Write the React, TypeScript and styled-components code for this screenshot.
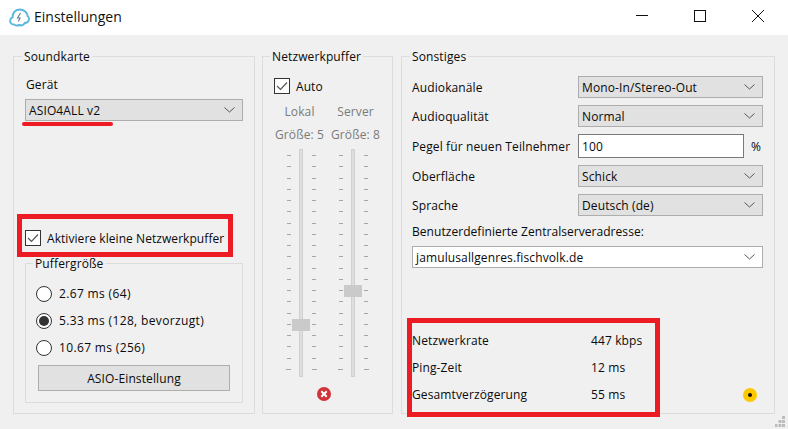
import React from "react";
import styled, { createGlobalStyle } from "styled-components";

const Global = createGlobalStyle`
  html, body { margin: 0; padding: 0; background: #f0f0f0; }
  * { box-sizing: border-box; }
`;

const Window = styled.div`
  position: relative;
  width: 788px;
  height: 429px;
  overflow: hidden;
  background: #f0f0f0;
  color: #0a0a0a;
  font-family: "Open Sans", "Noto Sans", sans-serif;
  font-size: 12px;
  letter-spacing: 0.12px;
`;

const TitleBar = styled.header`
  height: 35px;
  background: #fff;
  display: flex;
  align-items: center;
  padding: 0 1px 0 9px;
`;

const WindowTitle = styled.span`
  font-size: 14px;
  letter-spacing: 0;
  margin: 0 0 2px 4px;
  flex: 1;
  color: #111;
`;

const CaptionButton = styled.div`
  width: 58px;
  height: 32px;
  display: flex;
  align-items: center;
  justify-content: center;
  margin-bottom: 3px;
`;

const Columns = styled.main`
  display: flex;
  padding: 21px 13px 0 13px;
  height: 379px;
`;

const Group = styled.section<{ $w: number; $ml?: number }>`
  position: relative;
  width: ${(p) => p.$w}px;
  margin-left: ${(p) => p.$ml ?? 0}px;
  border: 1px solid #dcdcdc;
  display: flex;
  flex-direction: column;
`;

const GroupTitle = styled.span<{ $left?: number }>`
  position: absolute;
  top: -8px;
  left: ${(p) => p.$left ?? 8}px;
  padding: 0 2px;
  line-height: 16px;
  background: #f0f0f0;
`;

const SoundBody = styled.div`
  flex: 1;
  display: flex;
  flex-direction: column;
  padding: 0 11px 11px 11px;
`;

const Label = styled.div`
  line-height: 16px;
`;

const DeviceLabel = styled(Label)`
  margin-top: 20px;
  margin-bottom: 6px;
  padding-left: 1px;
`;

const Combo = styled.div<{ $white?: boolean }>`
  height: 22px;
  flex: 1;
  display: flex;
  align-items: center;
  justify-content: space-between;
  padding: 0 7px 0 3px;
  background: ${(p) => (p.$white ? "#fff" : "#e1e1e1")};
  border: 1px solid #adadad;
`;

const Chevron = () => (
  <svg width="11" height="6" viewBox="0 0 11 6" fill="none" stroke="#555" strokeWidth="1">
    <path d="M0.5 0.5 L5.5 5 L10.5 0.5" />
  </svg>
);

const CheckRow = styled.div<{ $mt: number }>`
  display: flex;
  align-items: center;
  gap: 6px;
  margin-top: ${(p) => p.$mt}px;
  height: 16px;
  letter-spacing: 0.06px;
`;

const CheckBox = styled.span`
  width: 16px;
  height: 16px;
  background: #fff;
  border: 1px solid #333;
  display: flex;
  align-items: center;
  justify-content: center;
`;

const Check = () => (
  <svg width="12" height="10" viewBox="0 0 12 10" fill="none" stroke="#555" strokeWidth="1.2">
    <path d="M1 5 L4.5 8.5 L11 1.5" />
  </svg>
);

const InnerGroup = styled.section`
  position: relative;
  margin-top: 17px;
  flex: 1;
  border: 1px solid #dcdcdc;
  padding: 16px 12px 11px 10px;
  display: flex;
  flex-direction: column;
`;

const RadioRow = styled.div`
  display: flex;
  align-items: center;
  gap: 7px;
  height: 27px;
  line-height: 16px;
  letter-spacing: 0.35px;
`;

const Radio = styled.span<{ $on?: boolean }>`
  width: 16px;
  height: 16px;
  border-radius: 50%;
  border: 1px solid #333;
  background: #fff;
  display: flex;
  align-items: center;
  justify-content: center;
  &::after {
    content: "";
    display: ${(p) => (p.$on ? "block" : "none")};
    width: 10px;
    height: 10px;
    border-radius: 50%;
    background: #333;
  }
`;

const PushButton = styled.div`
  margin: 4px 0 0 2px;
  height: 26px;
  display: flex;
  align-items: center;
  justify-content: center;
  background: #e1e1e1;
  border: 1px solid #adadad;
`;

const BufferBody = styled.div`
  flex: 1;
  display: flex;
  flex-direction: column;
  padding: 21px 11px 0 11px;
`;

const BufferColumns = styled.div`
  display: flex;
  justify-content: space-between;
  margin-top: 9px;
`;

const BufferColumn = styled.div`
  width: 51px;
  display: flex;
  flex-direction: column;
  align-items: center;
  color: #7a7a7a;
`;

const SizeLabel = styled.div`
  margin-top: 7px;
  line-height: 16px;
  white-space: nowrap;
`;

const SliderWrap = styled.div<{ $shift: number }>`
  position: relative;
  margin-top: 6px;
  margin-left: ${(p) => p.$shift * 2}px;
  width: 80px;
  height: 228px;
  display: flex;
  justify-content: center;
  flex-shrink: 0;
`;

const Groove = styled.div`
  width: 4px;
  height: 100%;
  background: #dedede;
  border: 1px solid #d0d0d0;
`;

const TickColumn = styled.div<{ $side: "l" | "r" }>`
  position: absolute;
  top: 6px;
  bottom: 7px;
  ${(p) => (p.$side === "l" ? "left: 26px;" : "right: 25px;")}
  width: 4px;
  display: flex;
  flex-direction: column;
  justify-content: space-between;
  align-items: ${(p) => (p.$side === "l" ? "flex-end" : "flex-start")};
`;

const Tick = styled.i<{ $long?: boolean }>`
  display: block;
  width: ${(p) => (p.$long ? 5 : 4)}px;
  height: 1px;
  flex: none;
  background: #a8a898;
`;

const Handle = styled.div<{ $top: number }>`
  position: absolute;
  left: 31px;
  top: ${(p) => p.$top}px;
  width: 18px;
  height: 12px;
  background: #cacaca;
`;

const ErrorIcon = styled.div`
  margin: 10px 0 0 43px;
  align-self: flex-start;
  display: flex;
`;

const OtherBody = styled.div`
  flex: 1;
  display: flex;
  flex-direction: column;
  padding: 19px 11px 5px 10px;
`;

const SettingRows = styled.div`
  display: flex;
  flex-direction: column;
  gap: 7px;
`;

const SettingRow = styled.div`
  display: flex;
  align-items: center;
  white-space: nowrap;
`;

const SettingLabel = styled.span`
  width: 166px;
  flex: none;
`;

const Field = styled.div`
  width: 166px;
  height: 24px;
  background: #fff;
  border: 1px solid #7a7a7a;
  padding: 0 3px;
  display: flex;
  align-items: center;
`;

const Percent = styled.span`
  margin-left: 7px;
`;

const AddressLabel = styled(Label)`
  margin-top: 8px;
  margin-bottom: 6px;
  letter-spacing: 0.05px;
`;

const Stats = styled.div`
  margin-top: auto;
  display: flex;
  flex-direction: column;
`;

const StatRow = styled.div`
  height: 27px;
  display: flex;
  align-items: center;
`;

const StatName = styled.span`
  width: 179px;
`;

const StatValue = styled.span`
  flex: 1;
`;

const Led = styled.span`
  width: 14px;
  height: 14px;
  border-radius: 50%;
  background: #fcc800;
  margin-right: 6px;
  display: flex;
  align-items: center;
  justify-content: center;
  &::after {
    content: "";
    width: 4px;
    height: 4px;
    border-radius: 50%;
    background: #111;
  }
`;

const RedBox = styled.div<{ $x: number; $y: number; $w: number; $h: number }>`
  position: absolute;
  left: ${(p) => p.$x}px;
  top: ${(p) => p.$y}px;
  width: ${(p) => p.$w}px;
  height: ${(p) => p.$h}px;
  border: 5px solid #ed1c24;
  pointer-events: none;
`;

const RedStroke = styled.div`
  position: absolute;
  left: 22px;
  top: 122px;
  width: 91px;
  height: 4px;
  border-radius: 2px;
  background: #ed1c24;
`;

const Grip = styled.svg`
  position: absolute;
  right: 0;
  bottom: 0;
`;

const TICKS = Array.from({ length: 20 }, (_, i) => i);

const Slider = ({ top, shift }: { top: number; shift: number }) => (
  <SliderWrap $shift={shift}>
    <Groove />
    <TickColumn $side="l">
      {TICKS.map((i) => (
        <Tick key={i} $long={i === 19} />
      ))}
    </TickColumn>
    <TickColumn $side="r">
      {TICKS.map((i) => (
        <Tick key={i} $long={i === 19} />
      ))}
    </TickColumn>
    <Handle $top={top} />
  </SliderWrap>
);

const Setting = ({ label, value }: { label: string; value: string }) => (
  <SettingRow>
    <SettingLabel>{label}</SettingLabel>
    <Combo>
      {value}
      <Chevron />
    </Combo>
  </SettingRow>
);

const Stat = ({ name, value, led }: { name: string; value: string; led?: boolean }) => (
  <StatRow>
    <StatName>{name}</StatName>
    <StatValue>{value}</StatValue>
    {led && <Led />}
  </StatRow>
);

export default function App() {
  return (
    <Window>
      <Global />
      <TitleBar>
        <svg width="21" height="19" viewBox="0 0 21 19" fill="none">
          <path
            d="M5 16.5 C2 16.5 1 14.5 1.2 12.5 C1.4 10.5 2.6 9.5 3.6 9.2 C3.4 5.5 6 1.5 10.5 1.5 C15 1.5 18.5 4.5 18.6 8 C20 9 20.3 11.5 19.4 13 C18.5 14.6 17 15 16 14.8 C15 16.8 12.5 18 10.5 17 C8.8 17.8 6.5 17.5 5 16.5 Z"
            stroke="#5bb8dc"
            strokeWidth="2"
          />
          <path d="M11.5 5 L8.5 10 L11 10 L9.5 13.5" stroke="#5b7f95" strokeWidth="1.1" />
        </svg>
        <WindowTitle>Einstellungen</WindowTitle>
        <CaptionButton>
          <svg width="12" height="12" viewBox="0 0 12 12" stroke="#111" fill="none">
            <path d="M0 5.5 H12" />
          </svg>
        </CaptionButton>
        <CaptionButton>
          <svg width="12" height="12" viewBox="0 0 12 12" stroke="#111" fill="none">
            <rect x="0.5" y="0.5" width="11" height="11" />
          </svg>
        </CaptionButton>
        <CaptionButton>
          <svg width="12" height="12" viewBox="0 0 12 12" stroke="#111" fill="none">
            <path d="M0 0 L12 12 M12 0 L0 12" />
          </svg>
        </CaptionButton>
      </TitleBar>
      <Columns>
        <Group $w={242}>
          <GroupTitle>Soundkarte</GroupTitle>
          <SoundBody>
            <DeviceLabel>Gerät</DeviceLabel>
            <SettingRow>
              <Combo>
                ASIO4ALL v2
                <Chevron />
              </Combo>
            </SettingRow>
            <CheckRow $mt={109}>
              <CheckBox>
                <Check />
              </CheckBox>
              Aktiviere kleine Netzwerkpuffer
            </CheckRow>
            <InnerGroup>
              <GroupTitle $left={7}>Puffergröße</GroupTitle>
              <RadioRow>
                <Radio />
                2.67 ms (64)
              </RadioRow>
              <RadioRow>
                <Radio $on />
                5.33 ms (128, bevorzugt)
              </RadioRow>
              <RadioRow>
                <Radio />
                10.67 ms (256)
              </RadioRow>
              <PushButton>ASIO-Einstellung</PushButton>
            </InnerGroup>
          </SoundBody>
        </Group>
        <Group $w={131} $ml={7}>
          <GroupTitle $left={7}>Netzwerkpuffer</GroupTitle>
          <BufferBody>
            <CheckRow $mt={0}>
              <CheckBox>
                <Check />
              </CheckBox>
              Auto
            </CheckRow>
            <BufferColumns>
              <BufferColumn>
                Lokal
                <SizeLabel>Größe: 5</SizeLabel>
                <Slider top={170} shift={1} />
              </BufferColumn>
              <BufferColumn>
                Server
                <SizeLabel>Größe: 8</SizeLabel>
                <Slider top={136} shift={-3} />
              </BufferColumn>
            </BufferColumns>
            <ErrorIcon>
              <svg width="14" height="14" viewBox="0 0 14 14">
                <circle cx="7" cy="7" r="7" fill="#d13438" />
                <path d="M4.3 4.3 L9.7 9.7 M9.7 4.3 L4.3 9.7" stroke="#fff" strokeWidth="2" />
              </svg>
            </ErrorIcon>
          </BufferBody>
        </Group>
        <Group $w={374} $ml={8}>
          <GroupTitle>Sonstiges</GroupTitle>
          <OtherBody>
            <SettingRows>
              <Setting label="Audiokanäle" value="Mono-In/Stereo-Out" />
              <Setting label="Audioqualität" value="Normal" />
              <SettingRow>
                <SettingLabel>Pegel für neuen Teilnehmer</SettingLabel>
                <Field>100</Field>
                <Percent>%</Percent>
              </SettingRow>
              <Setting label="Oberfläche" value="Schick" />
              <Setting label="Sprache" value="Deutsch (de)" />
            </SettingRows>
            <AddressLabel>Benutzerdefinierte Zentralserveradresse:</AddressLabel>
            <SettingRow>
              <Combo $white>
                jamulusallgenres.fischvolk.de
                <Chevron />
              </Combo>
            </SettingRow>
            <Stats>
              <Stat name="Netzwerkrate" value="447 kbps" />
              <Stat name="Ping-Zeit" value="12 ms" />
              <Stat name="Gesamtverzögerung" value="55 ms" led />
            </Stats>
          </OtherBody>
        </Group>
      </Columns>
      <RedStroke />
      <RedBox $x={17} $y={214} $w={216} $h={43} />
      <RedBox $x={407} $y={318} $w={253} $h={99} />
      <Grip width="13" height="14" viewBox="0 0 13 14" fill="#bdbdbd">
        <rect x="7" y="1" width="3" height="3" />
        <rect x="3.5" y="5" width="3" height="3" />
        <rect x="7" y="5" width="3" height="3" />
        <rect x="0" y="9" width="2.5" height="3" />
        <rect x="3.5" y="9" width="3" height="3" />
        <rect x="7" y="9" width="3" height="3" />
      </Grip>
    </Window>
  );
}
